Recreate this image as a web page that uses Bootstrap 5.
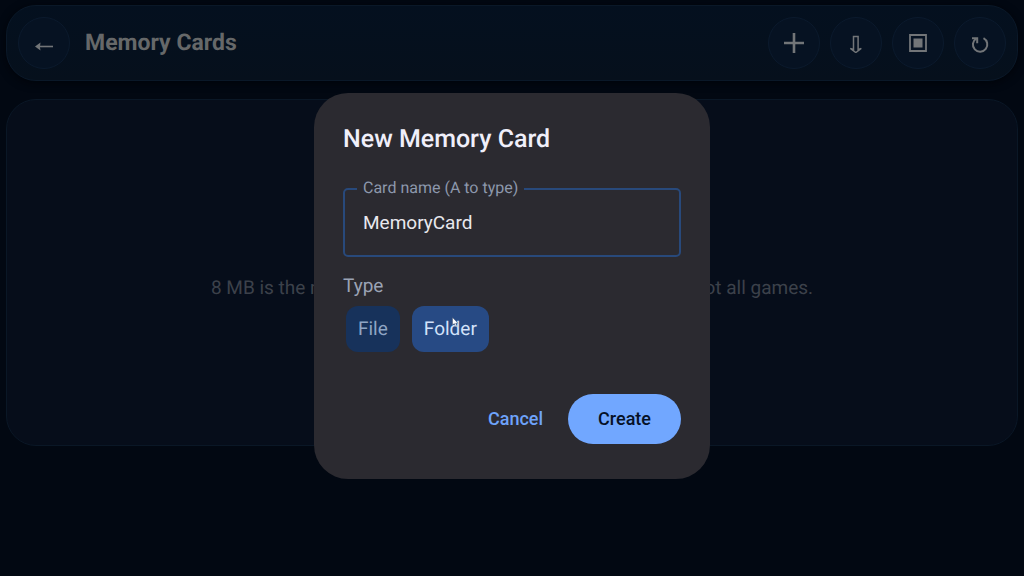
<!DOCTYPE html>
<html lang="en" data-bs-theme="dark">
<head>
<meta charset="utf-8">
<meta name="viewport" content="width=device-width, initial-scale=1">
<title>Memory Cards</title>
<link href="https://cdn.jsdelivr.net/npm/bootstrap@5.3.0/dist/css/bootstrap.min.css" rel="stylesheet">
<style>
  body { font-family: Roboto, "Noto Sans", sans-serif; background: #020812; font-size: 18px; line-height: 24px; text-rendering: geometricPrecision; }
  .screen { padding: 5px 6px; }
  .top-bar { background: linear-gradient(#04101f, #06101c); border: 1px solid #0a1828; border-radius: 30px; padding: 11px; box-shadow: 0 2px 8px #01040a; }
  .top-bar h1 { font-size: 23px; line-height: 32px; margin-left: 15px; color: #666869; }
  .round-btn { width: 52px; height: 52px; padding: 0; border: 1px solid #0b1a2d; background: #061222; color: #727578; }
  .round-btn:hover { background: #0a1a30; color: #8a8d90; }
  .tools { gap: 10px; }
  .cards-panel { min-height: 347px; margin-top: 18px; padding-top: 30px; background: #060d1a; border: 1px solid #0a1726; border-radius: 30px; color: #3c414a; }
  .hint { font-size: 19px; }

  .new-card .modal-dialog { max-width: 396px; padding-bottom: 5px; }
  .new-card .modal-content { background: #2b2a30; border: 0; border-radius: 34px; padding: 31px 29px 35px; }
  .new-card h2 { font-size: 25px; line-height: 32px; color: #f0effa; }
  .outlined { margin-top: 32px; }
  .outlined label { position: absolute; top: -12px; left: 14px; padding: 0 6px; font-size: 16px; background: #2b2a30; color: #8d98ac; }
  .outlined input, .outlined input:focus { height: 69px; padding: 0 18px; font-size: 19px; color: #e8e8ee; background: transparent; border: 2px solid #28497b; border-radius: 5px; box-shadow: none; }
  .type-label { margin-top: 17px; font-size: 19px; color: #9ba3b5; }
  .chips { gap: 12px; padding-left: 3px; }
  .chips .btn { --bs-btn-color: #8fa5c4; --bs-btn-bg: #17325b; --bs-btn-hover-bg: #1c3b6a; --bs-btn-hover-color: #a9bcd8; --bs-btn-active-bg: #274a84; --bs-btn-active-color: #d3e2fa; height: 46px; padding: 0 12px; line-height: 46px; font-size: 19px; border: 0; border-radius: 12px; }
  .pointer { position: absolute; left: 40px; top: 11px; }
  .actions { gap: 13px; margin-top: 42px; }
  .actions .btn { height: 50px; padding: 0 12px; font-size: 18px; font-weight: 500; border: 0; }
  .actions .btn-link { color: #6ea3fb; text-decoration: none; }
  .actions .btn-primary { --bs-btn-bg: #71a7ff; --bs-btn-color: #061126; --bs-btn-hover-bg: #8ab7ff; --bs-btn-hover-color: #061126; padding: 0 30px; }
</style>
</head>
<body>
<div class="screen d-flex flex-column min-vh-100">
  <header class="top-bar d-flex align-items-center">
    <button class="btn round-btn rounded-circle d-flex align-items-center justify-content-center" type="button" aria-label="Back">
      <svg width="20" height="20" viewBox="0 0 20 20" fill="none" stroke="currentColor" stroke-width="1.600"><path d="M3 13.500H19"/><path d="M1 13.500L6.500 9.500Q5.500 13.500 6.500 17.500Z" fill="currentColor" stroke="none"/></svg>
    </button>
    <h1 class="fw-bold mb-0 me-auto">Memory Cards</h1>
    <div class="tools d-flex">
      <button class="btn round-btn rounded-circle d-flex align-items-center justify-content-center" type="button" aria-label="New card">
        <svg width="20" height="20" viewBox="0 0 20 20" stroke="currentColor" stroke-width="2.600"><path d="M0 10H20M10 0V20"/></svg>
      </button>
      <button class="btn round-btn rounded-circle d-flex align-items-center justify-content-center" type="button" aria-label="Import">
        <svg width="20" height="20" viewBox="0 0 20 20" fill="none" stroke="currentColor" stroke-width="1.500"><path d="M7.500 3.400H12.100V16.500L15.300 15.500L9.800 19.500L4.300 15.500L7.500 16.500Z"/></svg>
      </button>
      <button class="btn round-btn rounded-circle d-flex align-items-center justify-content-center" type="button" aria-label="Select">
        <svg width="20" height="20" viewBox="0 0 20 20"><path d="M2 2H18V18H2Z" fill="none" stroke="currentColor" stroke-width="1.800"/><path d="M5.500 5.500H14.500V14.500H5.500Z" fill="currentColor"/></svg>
      </button>
      <button class="btn round-btn rounded-circle d-flex align-items-center justify-content-center" type="button" aria-label="Refresh">
        <svg width="20" height="20" viewBox="0 0 20 20" fill="none" stroke="currentColor" stroke-width="2"><path d="M13.500 5.200A7.200 7.200 0 1 1 6.200 5.500"/><path d="M2 5.200L7.200 5.200L7.200 10.200"/></svg>
      </button>
    </div>
  </header>
  <main class="cards-panel d-flex align-items-center justify-content-center px-4">
    <p class="hint mb-0 text-center">8 MB is the most compatible. Folder cards suit many, but not all games.</p>
  </main>
</div>

<div class="modal new-card d-block" tabindex="-1" role="dialog" aria-labelledby="dlgTitle">
  <div class="modal-dialog modal-dialog-centered my-0 mx-auto min-vh-100">
    <form class="modal-content">
      <h2 id="dlgTitle" class="fw-medium mb-0">New Memory Card</h2>
      <div class="outlined position-relative">
        <input id="cardName" class="form-control" type="text" value="MemoryCard">
        <label for="cardName">Card name (A to type)</label>
      </div>
      <div class="type-label" id="typeLabel">Type</div>
      <div class="chips d-flex mt-2" role="radiogroup" aria-labelledby="typeLabel">
        <div><input class="btn-check" type="radio" name="type" id="typeFile"><label class="btn" for="typeFile">File</label></div>
        <div class="position-relative"><input class="btn-check" type="radio" name="type" id="typeFolder" checked><label class="btn" for="typeFolder">Folder</label>
          <svg class="pointer pe-none" width="7" height="11" viewBox="0 0 7 11"><path d="M.5 .5V8L2.300 6.500L3.800 10L5 9.500L3.700 6.200H6Z" fill="#fff" stroke="#33415c" stroke-width=".4"/></svg>
        </div>
      </div>
      <div class="actions d-flex justify-content-end">
        <button class="btn btn-link" type="button">Cancel</button>
        <button class="btn btn-primary rounded-pill" type="submit">Create</button>
      </div>
    </form>
  </div>
</div>
<script src="https://cdn.jsdelivr.net/npm/bootstrap@5.3.0/dist/js/bootstrap.bundle.min.js"></script>
</body>
</html>
